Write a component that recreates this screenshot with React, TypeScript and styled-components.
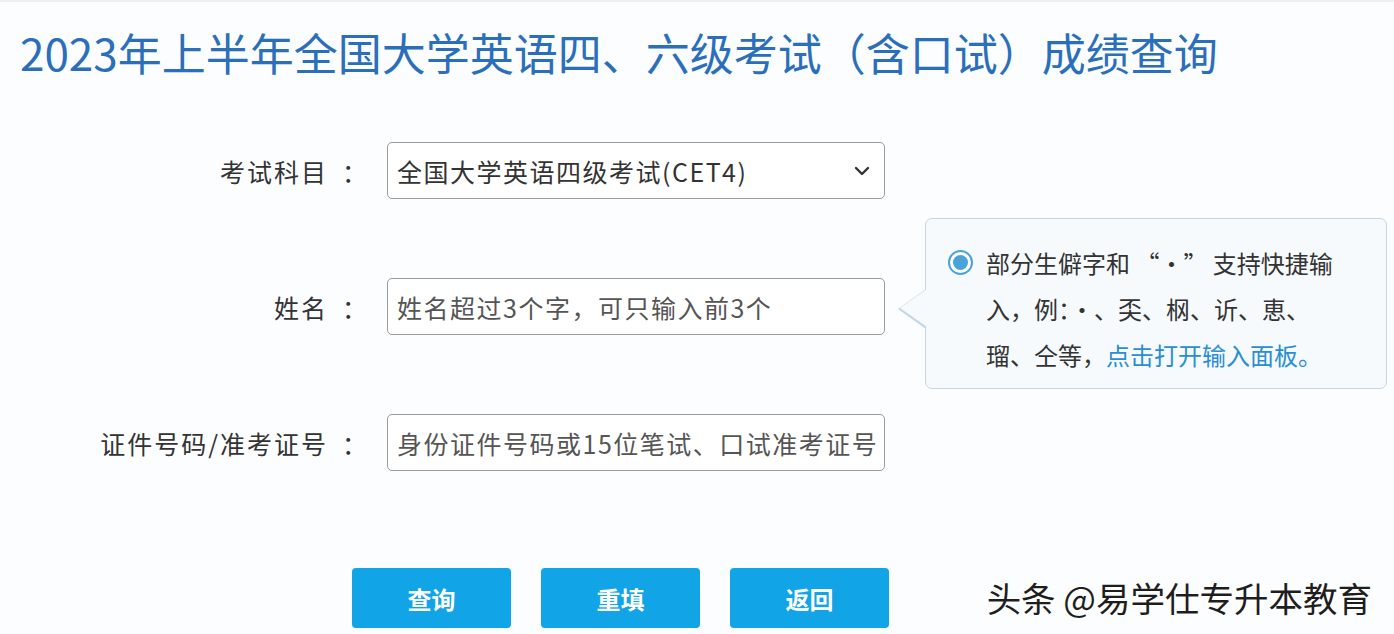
import * as React from 'react'
import styled, { createGlobalStyle } from 'styled-components'

const Global = createGlobalStyle`
    html, body {
        margin: 0;
        padding: 0;
        background: #fbfdff;
    }
    body {
        font-family: "Noto Sans CJK SC", "Noto Sans", sans-serif;
        color: #333;
    }
`

const Page = styled.div`
    position: relative;
    width: 1394px;
    height: 634px;
    overflow: hidden;
    box-sizing: border-box;
    border-top: 2px solid #eef1f4;
    padding: 18px 0 0 20px;
`
const Title = styled.h1`
    margin: 0;
    font-size: 44px;
    font-weight: 400;
    line-height: 64px;
    color: #2b6fba;
    letter-spacing: 0;
`
const Form = styled.div`
    display: flex;
    flex-direction: column;
    gap: 79px;
    margin-top: 58px;
`
const Row = styled.div`
    position: relative;
    display: flex;
    align-items: center;
    gap: 20px;
`
const Label = styled.label`
    display: flex;
    justify-content: flex-end;
    width: 347px;
    font-size: 25px;
    letter-spacing: 2px;
    color: #333;
    white-space: nowrap;
`
const Colon = styled.span`
    margin-left: 14px;
    letter-spacing: 0;
`
const Field = styled.div<{ $placeholder?: boolean }>`
    display: flex;
    align-items: center;
    justify-content: space-between;
    box-sizing: border-box;
    width: 498px;
    height: 57px;
    padding: 0 14px 0 9px;
    border: 1px solid #9a9a9a;
    border-radius: 5px;
    background: #fff;
    font-size: 25px;
    letter-spacing: 1.5px;
    color: ${p => (p.$placeholder ? '#555' : '#333')};
    white-space: nowrap;
    overflow: hidden;
`
const Tip = styled.div`
    position: absolute;
    left: 905px;
    top: -60px;
    display: flex;
    align-items: flex-start;
    gap: 13px;
    width: 462px;
    height: 171px;
    box-sizing: border-box;
    padding: 21px 20px 0 22px;
    border: 1px solid #c3d6e6;
    border-radius: 7px;
    background: #f6fafd;
    font-size: 24px;
    line-height: 46px;
    color: #333;

    &::before,
    &::after {
        content: '';
        position: absolute;
        top: 70px;
        width: 0;
        height: 0;
        border-style: solid;
    }
    &::before {
        left: -28px;
        border-width: 20px 28px 20px 0;
        border-color: transparent #c3d6e6 transparent transparent;
    }
    &::after {
        left: -26px;
        border-width: 19px 27px 19px 0;
        border-color: transparent #f6fafd transparent transparent;
    }
`
const TipText = styled.div`
    white-space: nowrap;
`
const Radio = styled.span`
    flex-shrink: 0;
    display: inline-block;
    box-sizing: border-box;
    width: 25px;
    height: 25px;
    margin-top: 10px;
    border: 2px solid #4aa3d8;
    border-radius: 50%;
    background: #fff;
    position: relative;

    &::after {
        content: '';
        position: absolute;
        left: 3px;
        top: 3px;
        width: 15px;
        height: 15px;
        border-radius: 50%;
        background: #4aa3d8;
    }
`
const TipLink = styled.span`
    color: #2a8fd2;
`
const Buttons = styled.div`
    display: flex;
    gap: 30px;
    margin: 97px 0 0 332px;
`
const Button = styled.button`
    width: 159px;
    height: 60px;
    border: none;
    border-radius: 4px;
    background: #11a4e6;
    color: #fff;
    font-family: "Noto Sans CJK SC", sans-serif;
    font-size: 24px;
    font-weight: 700;
    cursor: pointer;
`
const Mark = styled.div`
    position: absolute;
    right: 22px;
    bottom: 12px;
    font-size: 34.5px;
    color: #1e1e1e;
    text-shadow: 2px 2px 0 #fff, -1px -1px 0 #fff;
`

const Chevron = () => (
    <svg width="16" height="10" viewBox="0 0 16 10">
        <path d="M2 2 L8 8 L14 2" fill="none" stroke="#333" strokeWidth="2.4" strokeLinecap="round" strokeLinejoin="round" />
    </svg>
)

const FieldLabel = ({ children }: { children: string }) => (
    <Label>
        {children}
        <Colon>：</Colon>
    </Label>
)

export default function App() {
    return (
        <Page>
            <Global />
            <Title>2023年上半年全国大学英语四、六级考试（含口试）成绩查询</Title>
            <Form>
                <Row>
                    <FieldLabel>考试科目</FieldLabel>
                    <Field>
                        全国大学英语四级考试(CET4)
                        <Chevron />
                    </Field>
                </Row>
                <Row>
                    <FieldLabel>姓名</FieldLabel>
                    <Field $placeholder>姓名超过3个字，可只输入前3个</Field>
                    <Tip>
                        <Radio />
                        <TipText>
                            部分生僻字和 “·” 支持快捷输
                            <br />
                            入，例：·、奀、㭎、䜣、恵、
                            <br />
                            瑠、仝等，<TipLink>点击打开输入面板。</TipLink>
                        </TipText>
                    </Tip>
                </Row>
                <Row>
                    <FieldLabel>证件号码/准考证号</FieldLabel>
                    <Field $placeholder>身份证件号码或15位笔试、口试准考证号</Field>
                </Row>
            </Form>
            <Buttons>
                <Button>查询</Button>
                <Button>重填</Button>
                <Button>返回</Button>
            </Buttons>
            <Mark>头条 @易学仕专升本教育</Mark>
        </Page>
    )
}
